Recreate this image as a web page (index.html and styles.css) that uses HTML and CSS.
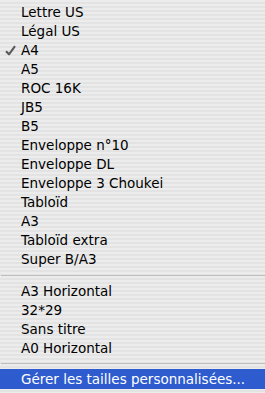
FILE: index.html
```html
<!DOCTYPE html>
<html>
<head>
    <title>Taille du papier</title>
    <link rel="stylesheet" href="styles.css">
</head>
<body>

<div class="menu">
    <div class="item">Lettre US</div>
    <div class="item">Légal US</div>
    <div class="item checked">
        <svg class="check" width="11" height="11" viewBox="0 0 11 11">
            <path d="M1 6.2 L4 9.3 L10 1.2" fill="none" stroke="#5a5a5a" stroke-width="2.1" stroke-linejoin="round"/>
        </svg>A4</div>
    <div class="item">A5</div>
    <div class="item">ROC 16K</div>
    <div class="item">JB5</div>
    <div class="item">B5</div>
    <div class="item">Enveloppe n°10</div>
    <div class="item">Enveloppe DL</div>
    <div class="item">Enveloppe 3 Choukei</div>
    <div class="item">Tabloïd</div>
    <div class="item">A3</div>
    <div class="item">Tabloïd extra</div>
    <div class="item">Super B/A3</div>

    <div class="separator"></div>

    <div class="item">A3 Horizontal</div>
    <div class="item">32*29</div>
    <div class="item">Sans titre</div>
    <div class="item">A0 Horizontal</div>

    <div class="separator short"></div>

    <div class="item selected">Gérer les tailles personnalisées...</div>
</div>

</body>
</html>
```

FILE: styles.css
```css
body {
    margin: 0;
    font-family: "DejaVu Sans", "Lucida Grande", sans-serif;
    background: #e9e9e9;
}
.menu {
    width: 265px;
    height: 393px;
    padding-top: 3px;
    box-sizing: border-box;
    background: repeating-linear-gradient(to bottom, #ececec 0, #ececec 2px, #e3e3e3 2px, #e3e3e3 4px);
    color: #000;
    font-size: 13.5px;
}
.item {
    position: relative;
    height: 19px;
    line-height: 19px;
    padding-left: 21px;
    white-space: nowrap;
}
.check {
    position: absolute;
    left: 5px;
    top: 4px;
}
.separator {
    height: 13px;
    position: relative;
}
.separator::after {
    content: "";
    position: absolute;
    left: 1px;
    right: 0;
    top: 6px;
    height: 1px;
    background: #bdbdbd;
}
.separator.short {
    height: 11px;
}
.separator.short::after {
    top: 5px;
}
.selected {
    height: 20px;
    line-height: 20px;
    background: #2e5ccf;
    color: #fff;
}
```
